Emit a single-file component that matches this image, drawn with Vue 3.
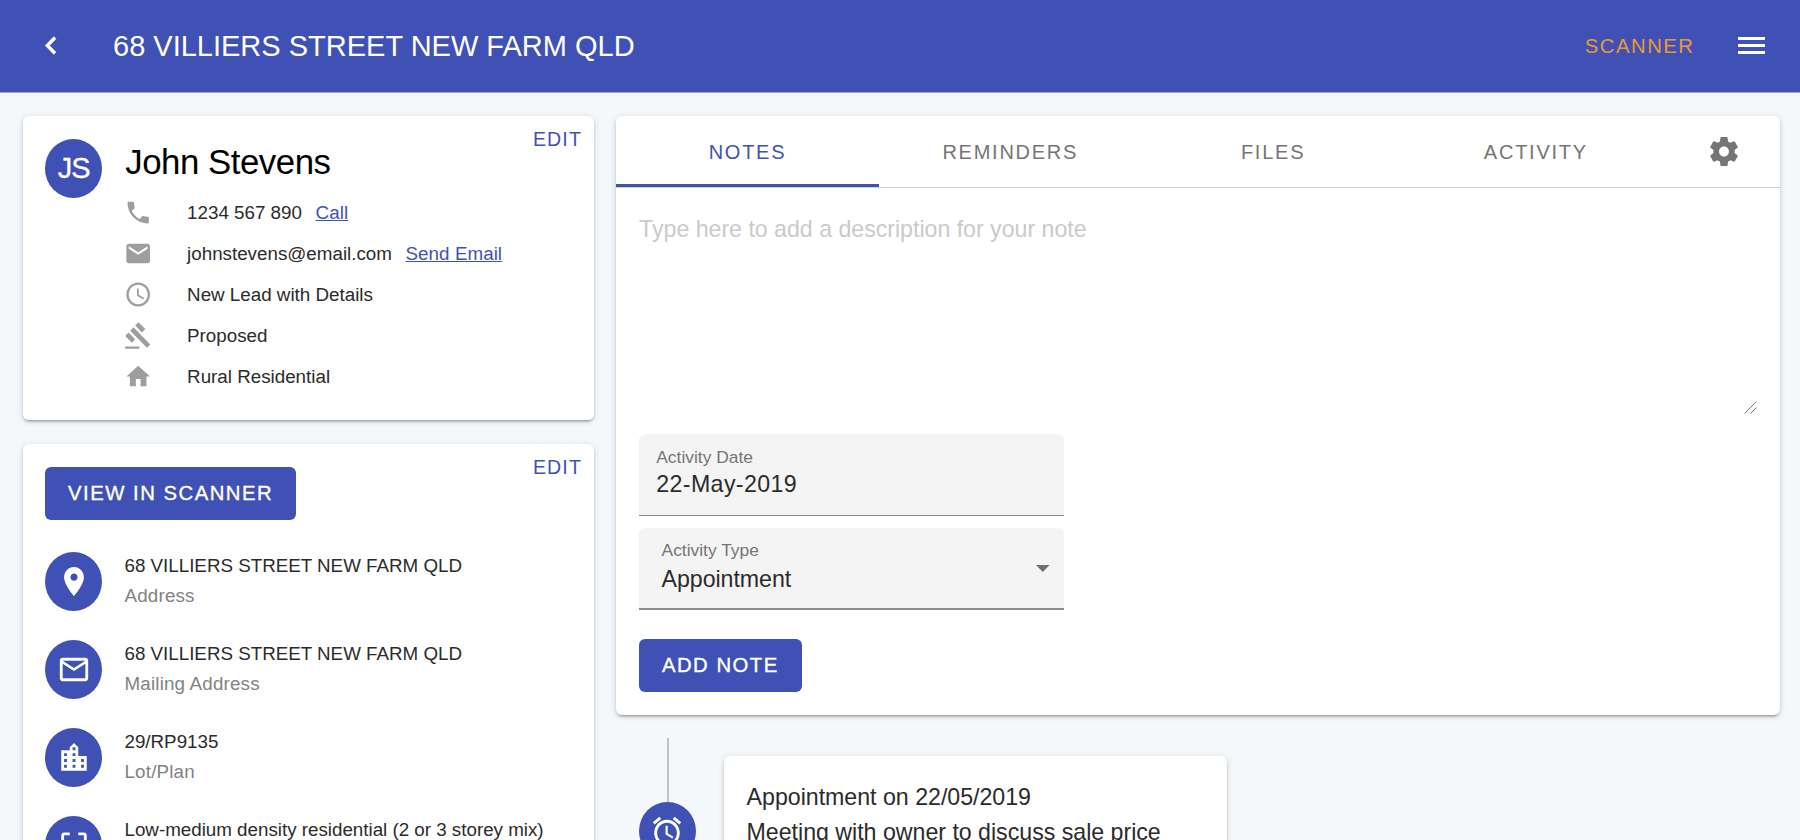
<script setup>
const icons = {
  back: 'M15.41 7.41L14 6l-6 6 6 6 1.41-1.41L10.83 12z',
  phone: 'M6.62 10.79c1.44 2.83 3.76 5.14 6.59 6.59l2.2-2.2c.27-.27.67-.36 1.02-.24 1.12.37 2.33.57 3.57.57.55 0 1 .45 1 1V20c0 .55-.45 1-1 1-9.39 0-17-7.61-17-17 0-.55.45-1 1-1h3.5c.55 0 1 .45 1 1 0 1.25.2 2.45.57 3.57.11.35.03.74-.25 1.02l-2.2 2.2z',
  mail: 'M20 4H4c-1.1 0-1.99.9-1.99 2L2 18c0 1.1.9 2 2 2h16c1.1 0 2-.9 2-2V6c0-1.1-.9-2-2-2zm0 4l-8 5-8-5V6l8 5 8-5v2z',
  clock: 'M11.99 2C6.47 2 2 6.48 2 12s4.47 10 9.99 10C17.52 22 22 17.52 22 12S17.52 2 11.99 2zM12 20c-4.42 0-8-3.58-8-8s3.58-8 8-8 8 3.58 8 8-3.58 8-8 8zM12.5 7H11v6l5.25 3.15.75-1.23-4.5-2.67z',
  gavel: 'M1 21h12v2H1zM5.245 8.07l2.83-2.827 14.14 14.142-2.828 2.828zM12.317 1l5.657 5.656-2.83 2.83-5.654-5.66zM3.825 9.485l5.657 5.657-2.828 2.828-5.657-5.657z',
  home: 'M10 20v-6h4v6h5v-8h3L12 3 2 12h3v8z',
  place: 'M12 2C8.13 2 5 5.13 5 9c0 5.25 7 13 7 13s7-7.75 7-13c0-3.87-3.13-7-7-7zm0 9.5c-1.38 0-2.5-1.12-2.5-2.5s1.12-2.5 2.5-2.5 2.5 1.12 2.5 2.5-1.12 2.5-2.5 2.5z',
  mailOutline: 'M20 4H4c-1.1 0-1.99.9-1.99 2L2 18c0 1.1.9 2 2 2h16c1.1 0 2-.9 2-2V6c0-1.1-.9-2-2-2zm0 14H4V8l8 5 8-5v10zm-8-7L4 6h16l-8 5z',
  city: 'M15 11V5l-3-3-3 3v2H3v14h18V11h-6zm-8 8H5v-2h2v2zm0-4H5v-2h2v2zm0-4H5V9h2v2zm6 8h-2v-2h2v2zm0-4h-2v-2h2v2zm0-4h-2V9h2v2zm0-4h-2V5h2v2zm6 12h-2v-2h2v2zm0-4h-2v-2h2v2z',
  frame: 'M3 5v4h2V5h4V3H5c-1.1 0-2 .9-2 2zm2 10H3v4c0 1.1.9 2 2 2h4v-2H5v-4zm14 4h-4v2h4c1.1 0 2-.9 2-2v-4h-2v4zm0-16h-4v2h4v4h2V5c0-1.1-.9-2-2-2z',
  alarm: 'M22 5.72l-4.6-3.86-1.29 1.53 4.6 3.86L22 5.72zM7.88 3.39L6.6 1.86 2 5.71l1.29 1.53 4.59-3.85zM12.5 8H11v6l4.75 2.85.75-1.23-4-2.37V8zM12 4c-4.97 0-9 4.03-9 9s4.02 9 9 9c4.97 0 9-4.03 9-9s-4.03-9-9-9zm0 16c-3.87 0-7-3.13-7-7s3.13-7 7-7 7 3.13 7 7-3.13 7-7 7z',
  gear: 'M19.43 12.98c.04-.32.07-.64.07-.98s-.03-.66-.07-.98l2.11-1.65c.19-.15.24-.42.12-.64l-2-3.46c-.12-.22-.39-.3-.61-.22l-2.49 1c-.52-.4-1.08-.73-1.69-.98l-.38-2.65C14.46 2.18 14.25 2 14 2h-4c-.25 0-.46.18-.49.42l-.38 2.65c-.61.25-1.17.59-1.69.98l-2.49-1c-.23-.09-.49 0-.61.22l-2 3.46c-.13.22-.07.49.12.64l2.11 1.65c-.04.32-.07.65-.07.98s.03.66.07.98l-2.11 1.65c-.19.15-.24.42-.12.64l2 3.46c.12.22.39.3.61.22l2.49-1c.52.4 1.08.73 1.69.98l.38 2.65c.03.24.24.42.49.42h4c.25 0 .46-.18.49-.42l.38-2.65c.61-.25 1.17-.59 1.69-.98l2.49 1c.23.09.49 0 .61-.22l2-3.46c.12-.22.07-.49-.12-.64l-2.11-1.65zM12 15.5c-1.93 0-3.5-1.57-3.5-3.5s1.57-3.5 3.5-3.5 3.5 1.57 3.5 3.5-1.57 3.5-3.5 3.5z',
}

const contact = [
  { icon: 'phone', text: '1234 567 890', link: 'Call' },
  { icon: 'mail', text: 'johnstevens@email.com', link: 'Send Email' },
  { icon: 'clock', text: 'New Lead with Details' },
  { icon: 'gavel', text: 'Proposed' },
  { icon: 'home', text: 'Rural Residential' },
]

const details = [
  { icon: 'place', text: '68 VILLIERS STREET NEW FARM QLD', label: 'Address' },
  { icon: 'mailOutline', text: '68 VILLIERS STREET NEW FARM QLD', label: 'Mailing Address' },
  { icon: 'city', text: '29/RP9135', label: 'Lot/Plan' },
  { icon: 'frame', text: 'Low-medium density residential (2 or 3 storey mix)' },
]

const tabs = ['NOTES', 'REMINDERS', 'FILES', 'ACTIVITY']
</script>

<template>
  <div class="app">
    <header class="bar">
      <svg class="ico back" viewBox="0 0 24 24" preserveAspectRatio="none"><path :d="icons.back" /></svg>
      <h1>68 VILLIERS STREET NEW FARM QLD</h1>
      <a class="scanner">SCANNER</a>
      <div class="menu"><i></i><i></i><i></i></div>
    </header>

    <main class="content">
      <section class="left">
        <article class="card person">
          <a class="edit">EDIT</a>
          <div class="circle initials">JS</div>
          <div class="info">
            <h2>John Stevens</h2>
            <div v-for="c in contact" :key="c.icon" class="row">
              <svg class="row-ico" viewBox="0 0 24 24" preserveAspectRatio="none"><path :d="icons[c.icon]" /></svg>
              <span>{{ c.text }}</span>
              <a v-if="c.link">{{ c.link }}</a>
            </div>
          </div>
        </article>

        <article class="card property">
          <a class="edit">EDIT</a>
          <button class="btn view">VIEW IN SCANNER</button>
          <div v-for="d in details" :key="d.icon" class="detail">
            <div class="circle">
              <svg class="ico" viewBox="0 0 24 24" preserveAspectRatio="none"><path :d="icons[d.icon]" /></svg>
            </div>
            <div class="detail-text">
              <p>{{ d.text }}</p>
              <p v-if="d.label" class="muted">{{ d.label }}</p>
            </div>
          </div>
        </article>
      </section>

      <section class="right">
        <article class="card notes">
          <nav class="tabs">
            <a v-for="(t, i) in tabs" :key="t" class="tab" :class="{ active: i === 0 }">{{ t }}</a>
            <div class="settings">
              <svg class="ico gear" viewBox="0 0 24 24" preserveAspectRatio="none"><path :d="icons.gear" /></svg>
            </div>
          </nav>
          <div class="note-input">
            <span>Type here to add a description for your note</span>
            <svg class="grip" viewBox="0 0 13 13"><path d="M.5 12.5L12.5 .5M6.5 12.5L12.5 6.5" /></svg>
          </div>
          <div class="field date">
            <label>Activity Date</label>
            <div class="value">22-May-2019</div>
          </div>
          <div class="field type">
            <div>
              <label>Activity Type</label>
              <div class="value">Appointment</div>
            </div>
            <svg class="caret" viewBox="0 0 14 7" preserveAspectRatio="none"><path d="M0 0h14L7 7z" /></svg>
          </div>
          <button class="btn add">ADD NOTE</button>
        </article>

        <div class="timeline">
          <div class="track">
            <div class="line"></div>
            <div class="circle">
              <svg class="ico" viewBox="0 0 24 24" preserveAspectRatio="none"><path :d="icons.alarm" /></svg>
            </div>
          </div>
          <article class="card event">
            <p>Appointment on 22/05/2019</p>
            <p>Meeting with owner to discuss sale price</p>
          </article>
        </div>
      </section>
    </main>
  </div>
</template>

<style>
body { margin: 0; background: #f4f8fb; overflow: hidden; }
</style>

<style scoped>
.app {
  width: 1800px;
  height: 840px;
  overflow: hidden;
  background: #f4f8fb;
  font-family: "Liberation Sans", Arial, sans-serif;
  color: #2b2b2b;
}
.app * { box-sizing: border-box; }
h1, h2, p { margin: 0; font-weight: 400; white-space: nowrap; }
svg { display: block; flex: none; }
.ico { width: 34px; height: 35px; fill: #fff; }

.bar {
  height: 92px;
  display: flex;
  align-items: center;
  padding: 0 35px 1px 34px;
  background: #3f51b5;
  box-shadow: 0 1px 0 #a0a6c8;
}
.back path { stroke: #fff; stroke-width: .6; }
.bar h1 {
  margin-left: 45px;
  flex: 1;
  font-size: 29px;
  line-height: 40px;
  color: #fff;
}
.scanner { font-size: 20.3px; line-height: 24px; letter-spacing: 1.5px; color: #ec9735; margin-right: 43.5px; }
.menu { width: 27px; display: grid; gap: 4px; }
.menu i { height: 3px; background: #fff; }

.content { display: flex; gap: 22.5px; padding: 24px 20px 0 22.7px; align-items: flex-start; }
.left { width: 570.9px; display: grid; gap: 23.2px; flex: none; }
.right { flex: 1; min-width: 0; }
.card {
  position: relative;
  background: #fff;
  border-radius: 6px;
  box-shadow: 0 4px 2px -3px rgba(0,0,0,.2), 0 2px 3px rgba(0,0,0,.16), 0 1px 7px rgba(0,0,0,.12);
}
.edit {
  position: absolute;
  top: 11px;
  right: 11.6px;
  font-size: 19.6px;
  line-height: 24px;
  letter-spacing: 1.1px;
  color: #3f51b5;
}
.circle {
  width: 57px;
  height: 58.6px;
  border-radius: 50%;
  background: #3f51b5;
  display: flex;
  align-items: center;
  justify-content: center;
  flex: none;
}

.person { height: 304.4px; padding: 23px 22.6px 0; display: flex; }
.initials { color: #fff; font-size: 29px; letter-spacing: -.9px; -webkit-text-stroke: .3px #fff; }
.info { margin-left: 23px; }
.info h2 { font-size: 34.8px; letter-spacing: -.47px; line-height: 46px; margin-bottom: 7px; color: #000; }
.row { height: 41px; display: flex; align-items: center; font-size: 18.8px; white-space: nowrap; }
.row-ico { width: 28.4px; height: 29px; fill: #9e9e9e; margin: 0 34.4px 0 -1px; }
.row a { margin-left: 13.6px; letter-spacing: .05px; color: #3f51b5; text-decoration: underline; text-decoration-thickness: 1.4px; }

.btn {
  border: 0;
  border-radius: 6px;
  background: #3f51b5;
  color: #fff;
  height: 52.6px;
  display: flex;
  align-items: center;
  justify-content: center;
  padding: 0;
  font: 20.3px "Liberation Sans", Arial, sans-serif;
  letter-spacing: 1.5px;
  -webkit-text-stroke: .35px #fff;
}
.property { height: 480px; padding: 23.6px 22.8px 0; }
.view { width: 250.3px; margin-bottom: 32.2px; }
.detail { display: flex; height: 88px; }
.detail-text { margin-left: 22px; margin-top: -.8px; font-size: 18.8px; line-height: 29.4px; letter-spacing: -.01px; }
.muted { color: #828282; letter-spacing: .18px; }

.notes { height: 599.3px; }
.tabs { height: 72px; display: flex; border-bottom: 1.5px solid #cfcfcf; }
.tab {
  width: 262.8px;
  height: 70.5px;
  line-height: 72px;
  text-align: center;
  font-size: 20px;
  letter-spacing: 1.75px;
  color: #757575;
  flex: none;
}
.tab.active { color: #3f51b5; box-shadow: inset 0 -3px 0 #3f51b5; }
.settings { flex: 1; display: flex; align-items: center; justify-content: center; }
.gear { fill: #757575; }
.note-input {
  height: 229px;
  margin: 17px 23px 0 23px;
  display: flex;
  justify-content: space-between;
  font-size: 23.2px;
  line-height: 48px;
  letter-spacing: -.025px;
  color: #cacaca;
}
.grip { width: 13px; height: 13px; align-self: flex-end; margin: 0 0 20.5px; stroke: #777; stroke-width: 1; fill: none; }
.field { width: 425px; height: 82px; margin-left: 23.2px; background: #f4f4f4; border-radius: 6px 6px 0 0; }
.field label { display: block; font-size: 17.4px; line-height: 20px; color: #757575; }
.value { font-size: 23.2px; line-height: 28px; }
.date { padding: 13px 17px 0; border-bottom: 1.5px solid #8b8b8b; }
.date .value { letter-spacing: .38px; margin-top: 2.5px; }
.type {
  margin-top: 12px;
  padding: 12px 14.5px 0 22.3px;
  border-bottom: 2px solid #8b8b8b;
  display: flex;
  justify-content: space-between;
}
.type .value { margin-top: 5px; letter-spacing: -.05px; }
.caret { width: 13.6px; height: 7px; fill: #6f6f6f; margin-top: 25.3px; }
.add { width: 162.5px; margin: 29px 0 0 23px; }

.timeline { display: flex; margin-top: 23px; }
.track { width: 57px; margin-left: 22.6px; display: flex; flex-direction: column; align-items: center; }
.line { width: 1.6px; height: 63.6px; margin-left: 1.6px; background: #c0c2c5; }
.event { width: 503px; height: 140px; margin: 18px 0 0 28.6px; padding: 23.3px 22.3px; }
.event p { font-size: 23.2px; line-height: 35px; letter-spacing: -.02px; }
</style>
